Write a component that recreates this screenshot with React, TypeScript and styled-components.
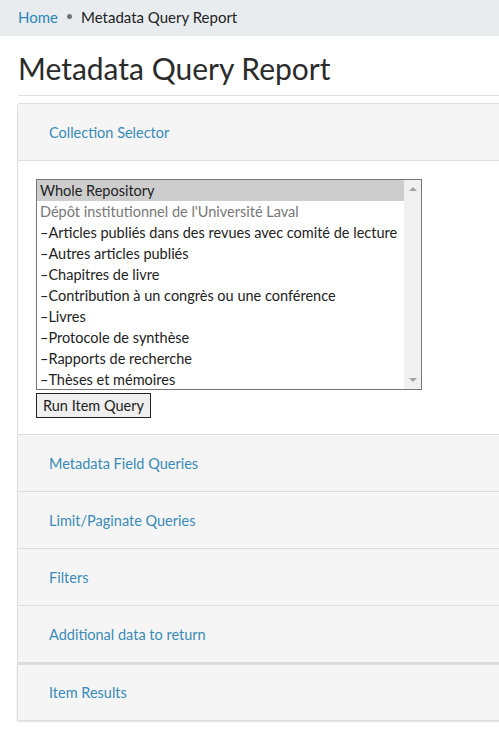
import React from 'react';
import styled, { createGlobalStyle } from 'styled-components';

const GlobalStyle = createGlobalStyle`
  html, body {
    margin: 0;
    padding: 0;
    background: #fff;
    overflow: hidden;
  }
  body {
    font-family: Lato, "Open Sans", sans-serif;
    color: #333;
  }
`;

const Page = styled.div`
  width: 499px;
  height: 732px;
  overflow: hidden;
`;

const Breadcrumb = styled.nav`
  background: #e9ecef;
  height: 39px;
  display: flex;
  align-items: center;
  gap: 9px;
  padding: 0 18px;
  font-size: 15px;
  margin-top: -3px;
`;

const Crumb = styled.span<{ $link?: boolean }>`
  color: ${p => (p.$link ? '#2a86b5' : '#222')};
`;

const Dot = styled.span`
  width: 5px;
  height: 5px;
  border-radius: 50%;
  background: #6c757d;
`;

const Content = styled.main`
  padding: 0 0 0 18px;
`;

const Title = styled.h1`
  margin: 14px 0 0;
  font-size: 30px;
  font-weight: 400;
  line-height: 36px;
  color: #2b2b2b;
  padding-bottom: 9px;
  border-bottom: 1px solid #dedede;
  width: 520px;
`;

const PanelGroup = styled.div`
  margin-top: 7px;
  width: 520px;
  margin-left: -1px;
`;

const Panel = styled.section<{ $shadow?: boolean }>`
  border: 1px solid #ddd;
  border-top: none;
  &:first-child {
    border-top: 1px solid #ddd;
    border-radius: 3px 0 0 0;
  }
  box-shadow: ${p => (p.$shadow ? '0 1px 2px rgba(0,0,0,0.12)' : 'none')};
`;

const PanelHeading = styled.div<{ $shadowTop?: boolean }>`
  background: #f5f5f5;
  height: ${p => (p.$shadowTop ? '55px' : '56px')};
  display: flex;
  align-items: center;
  padding-left: 31px;
  font-size: 14.5px;
  color: #3a8bb5;
  border-top: ${p => (p.$shadowTop ? '2px solid #dcdcdc' : 'none')};
`;

const PanelBody = styled.div`
  border-top: 1px solid #ddd;
  padding: 18px 18px 16px;
  background: #fff;
`;

const ListBox = styled.div`
  display: flex;
  width: 386px;
  height: 211px;
  box-sizing: border-box;
  border: 1px solid #767676;
  background: #fff;
  overflow: hidden;
`;

const OptionColumn = styled.div`
  flex: 1;
  min-width: 0;
  overflow: hidden;
`;

const OptionRow = styled.div<{ $selected?: boolean; $disabled?: boolean }>`
  height: 21px;
  line-height: 21px;
  padding: 0 3px;
  font-size: 14.5px;
  white-space: nowrap;
  color: ${p => (p.$disabled ? '#777' : '#222')};
  background: ${p => (p.$selected ? '#cdcdcd' : 'transparent')};
`;

const ScrollTrack = styled.div`
  width: 17px;
  background: #f0f0f0;
  display: flex;
  flex-direction: column;
  justify-content: space-between;
  align-items: center;
  padding: 7px 0;
  box-sizing: border-box;
`;

const Arrow = styled.span<{ $down?: boolean }>`
  width: 0;
  height: 0;
  border-left: 4px solid transparent;
  border-right: 4px solid transparent;
  ${p =>
    p.$down
      ? 'border-top: 4px solid #a3a3a3;'
      : 'border-bottom: 4px solid #a3a3a3;'}
`;

const RunButton = styled.button`
  display: block;
  margin-top: 3px;
  height: 25px;
  padding: 0 6px;
  border: 1px solid #222;
  background: #efefef;
  font-family: Lato, "Open Sans", sans-serif;
  font-size: 14.5px;
  color: #222;
`;

const collections = [
  'Articles publiés dans des revues avec comité de lecture',
  'Autres articles publiés',
  'Chapitres de livre',
  'Contribution à un congrès ou une conférence',
  'Livres',
  'Protocole de synthèse',
  'Rapports de recherche',
  'Thèses et mémoires',
];

const sections = [
  'Metadata Field Queries',
  'Limit/Paginate Queries',
  'Filters',
  'Additional data to return',
];

export default function App() {
  return (
    <Page>
      <GlobalStyle />
      <Breadcrumb>
        <Crumb $link>Home</Crumb>
        <Dot />
        <Crumb>Metadata Query Report</Crumb>
      </Breadcrumb>
      <Content>
        <Title>Metadata Query Report</Title>
        <PanelGroup>
          <Panel>
            <PanelHeading>Collection Selector</PanelHeading>
            <PanelBody>
              <ListBox role="listbox" aria-multiselectable="true">
                <OptionColumn>
                  <OptionRow role="option" $selected>Whole Repository</OptionRow>
                  <OptionRow role="option" $disabled>
                    Dépôt institutionnel de l'Université Laval
                  </OptionRow>
                  {collections.map(c => (
                    <OptionRow role="option" key={c}>–{c}</OptionRow>
                  ))}
                </OptionColumn>
                <ScrollTrack>
                  <Arrow />
                  <Arrow $down />
                </ScrollTrack>
              </ListBox>
              <RunButton type="button">Run Item Query</RunButton>
            </PanelBody>
          </Panel>
          {sections.map(s => (
            <Panel key={s}>
              <PanelHeading>{s}</PanelHeading>
            </Panel>
          ))}
          <Panel $shadow>
            <PanelHeading $shadowTop>Item Results</PanelHeading>
          </Panel>
        </PanelGroup>
      </Content>
    </Page>
  );
}
